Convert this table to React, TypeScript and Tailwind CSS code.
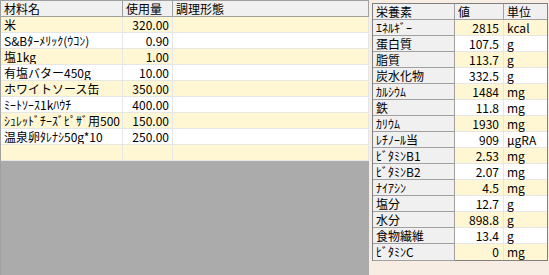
const ingredients = [
  { name: '米', qty: '320.00' },
  { name: 'S&Bﾀｰﾒﾘｯｸ(ｳｺﾝ)', qty: '0.90' },
  { name: '塩1kg', qty: '1.00' },
  { name: '有塩バター450g', qty: '10.00' },
  { name: 'ホワイトソース缶', qty: '350.00' },
  { name: 'ﾐｰﾄｿｰｽ1kﾊｳﾁ', qty: '400.00' },
  { name: 'ｼｭﾚｯﾄﾞﾁｰｽﾞﾋﾟｻﾞ用500', qty: '150.00' },
  { name: '温泉卵ﾀﾚﾅｼ50g*10', qty: '250.00' },
  { name: '', qty: '' },
];

const nutrients = [
  { name: 'ｴﾈﾙｷﾞｰ', value: '2815', unit: 'kcal' },
  { name: '蛋白質', value: '107.5', unit: 'g' },
  { name: '脂質', value: '113.7', unit: 'g' },
  { name: '炭水化物', value: '332.5', unit: 'g' },
  { name: 'ｶﾙｼｳﾑ', value: '1484', unit: 'mg' },
  { name: '鉄', value: '11.8', unit: 'mg' },
  { name: 'ｶﾘｳﾑ', value: '1930', unit: 'mg' },
  { name: 'ﾚﾁﾉｰﾙ当', value: '909', unit: 'μgRA' },
  { name: 'ﾋﾞﾀﾐﾝB1', value: '2.53', unit: 'mg' },
  { name: 'ﾋﾞﾀﾐﾝB2', value: '2.07', unit: 'mg' },
  { name: 'ﾅｲｱｼﾝ', value: '4.5', unit: 'mg' },
  { name: '塩分', value: '12.7', unit: 'g' },
  { name: '水分', value: '898.8', unit: 'g' },
  { name: '食物繊維', value: '13.4', unit: 'g' },
  { name: 'ﾋﾞﾀﾐﾝC', value: '0', unit: 'mg' },
];

export default function App() {
  return (
    <div
      className="flex w-[549px] h-[275px] bg-[#f7ede3] text-[12px] leading-[15px] text-black overflow-hidden"
      style={{ fontFamily: '"Noto Sans CJK JP", "Liberation Sans", sans-serif' }}
    >
      {/* 材料リスト */}
      <div className="w-[369px] h-full border-t border-l border-[#a0a0a0] bg-[#ababab] flex flex-col">
        <div className="grid grid-cols-[122px_50px_1fr] h-[16px] bg-[#f0f0f0] border-b border-[#a0a0a0]">
          <div className="px-[3px] border-r border-[#a0a0a0]">材料名</div>
          <div className="px-[3px] border-r border-[#a0a0a0]">使用量</div>
          <div className="px-[3px] border-r border-[#a0a0a0]">調理形態</div>
        </div>
        {ingredients.map((row, i) => (
          <div
            key={i}
            className={`grid grid-cols-[122px_50px_1fr] h-[16px] border-b border-[#e6e6e6] ${
              i % 2 === 0 ? 'bg-[#fff7d3]' : 'bg-white'
            }`}
          >
            <div className="px-[3px] border-r border-[#e6e6e6] whitespace-nowrap overflow-hidden">{row.name}</div>
            <div className="px-[3px] border-r border-[#e6e6e6] text-right">{row.qty}</div>
            <div className="border-r border-[#e6e6e6]" />
          </div>
        ))}
      </div>

      {/* 栄養素 */}
      <div className="ml-[3px] mt-[3px] w-[176px]">
        <div className="border border-[#808080] bg-white">
          <div className="grid grid-cols-[82px_49px_1fr] h-[16px] bg-[#f0f0f0] border-b border-[#a0a0a0]">
            <div className="px-[3px] border-r border-[#a0a0a0]">栄養素</div>
            <div className="px-[3px] border-r border-[#a0a0a0]">値</div>
            <div className="px-[3px]">単位</div>
          </div>
          {nutrients.map((row, i) => (
            <div
              key={row.name}
              className={`grid grid-cols-[82px_49px_1fr] h-[16px] border-b border-[#e6e6e6] last:border-b-0 ${
                i % 2 === 0 ? 'bg-[#fff7d3]' : 'bg-white'
              }`}
            >
              <div className="px-[3px] bg-[#f0f0f0] border-r border-b border-[#a0a0a0] -mb-px">{row.name}</div>
              <div className="px-[4px] border-r border-[#e6e6e6] text-right">{row.value}</div>
              <div className="px-[3px]">{row.unit}</div>
            </div>
          ))}
        </div>
      </div>
    </div>
  );
}
